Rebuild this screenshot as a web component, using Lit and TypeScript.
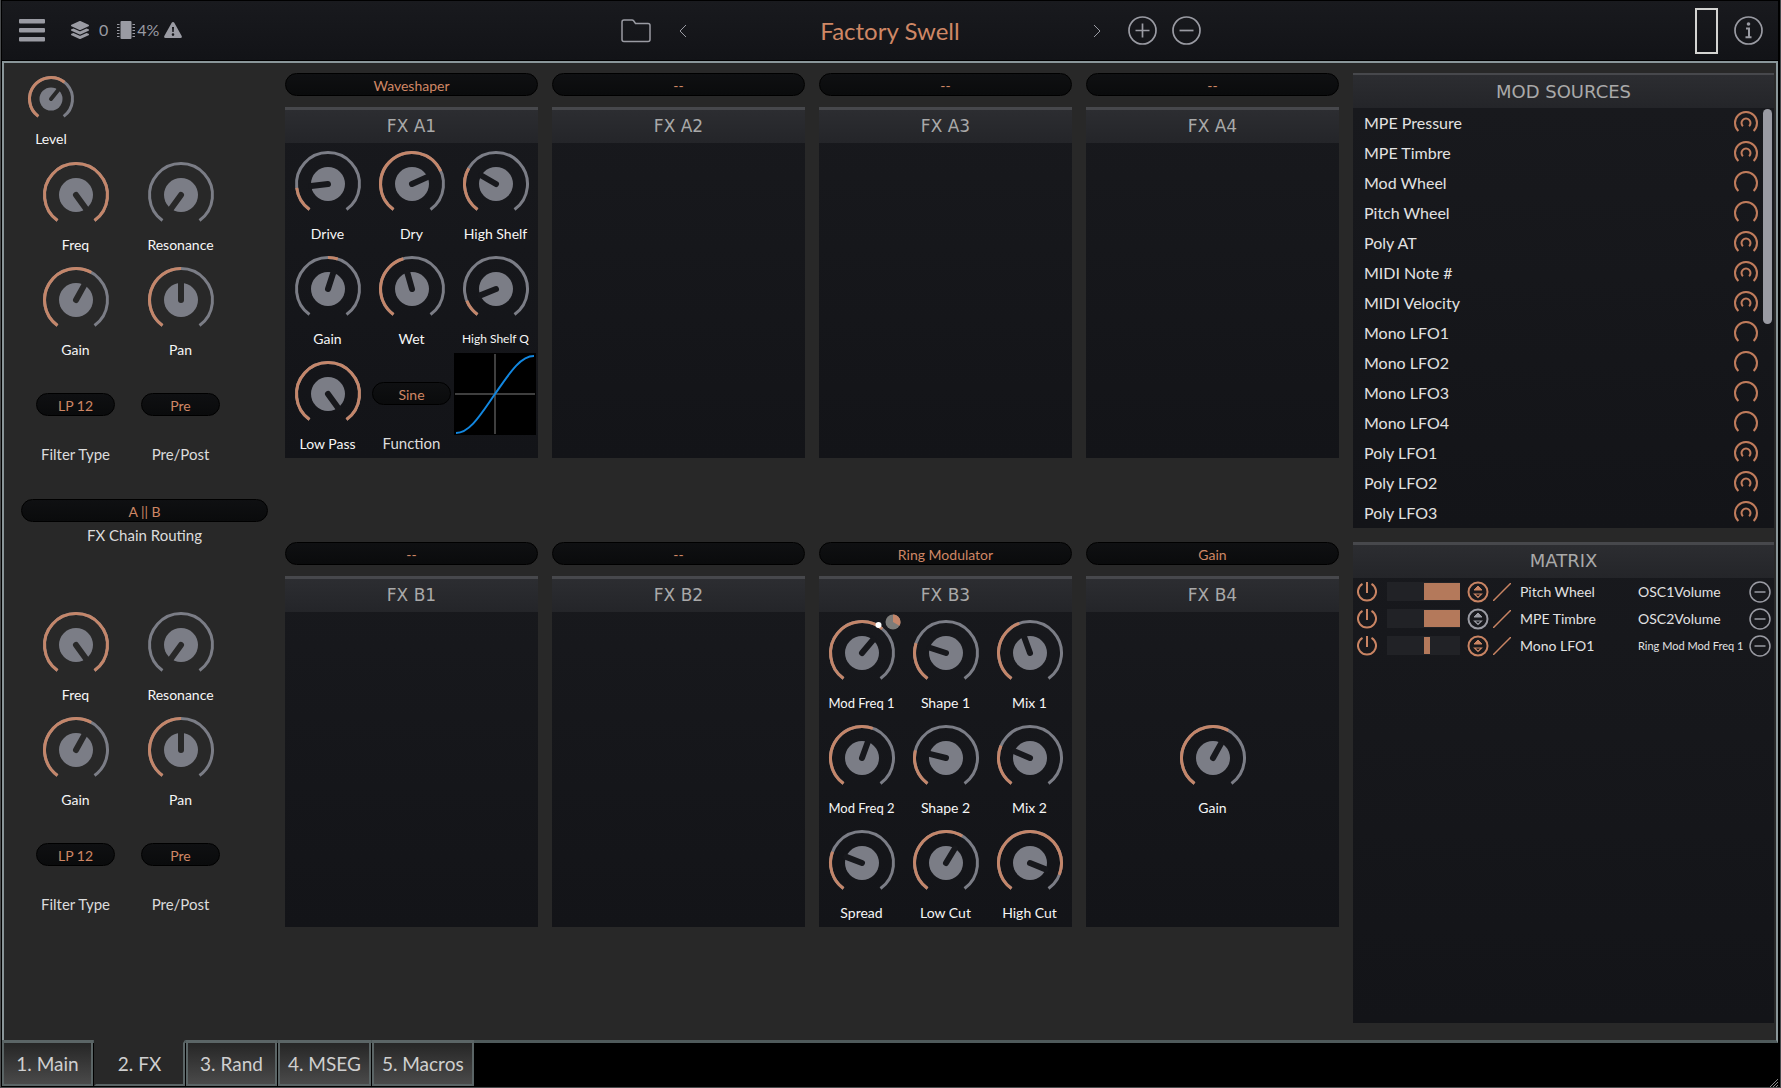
import { LitElement, html, svg, css, nothing } from "lit";
import { customElement, property } from "lit/decorators.js";
import { classMap } from "lit/directives/class-map.js";
import { styleMap } from "lit/directives/style-map.js";

interface KnobSpec {
  label: string;
  /** Pointer angle in degrees, 0 is straight up. */
  angle: number;
  /** Angle where the coloured arc starts; bipolar knobs start at 0. */
  from?: number;
  modulated?: boolean;
  /** Smaller caption for names that would crowd the neighbouring knob. */
  caption?: "compact" | "tight";
}

const LIMIT = 144;

const polar = (c: number, r: number, deg: number): string => {
  const a = (deg * Math.PI) / 180;
  return `${(c + r * Math.sin(a)).toFixed(2)} ${(c - r * Math.cos(a)).toFixed(2)}`;
};

const arc = (c: number, r: number, a: number, b: number): string =>
  `M${polar(c, r, a)}A${r} ${r} 0 ${b - a > 180 ? 1 : 0} 1 ${polar(c, r, b)}`;

@customElement("synth-knob")
export class SynthKnob extends LitElement {
  @property({ attribute: false }) spec!: KnobSpec;
  @property({ type: Boolean, reflect: true }) small = false;

  static styles = css`
    :host {
      display: flex;
      flex-direction: column;
      align-items: center;
      box-sizing: border-box;
      width: 84px;
      height: 105px;
      padding-top: 8px;
      gap: 9px;
    }
    :host([small]) {
      width: 46px;
      height: 72px;
      padding-top: 0;
    }
    .dial {
      position: relative;
      display: grid;
    }
    svg {
      display: block;
      overflow: visible;
    }
    .slider {
      position: absolute;
      inset: 0;
      width: 100%;
      height: 100%;
      margin: 0;
      opacity: 0;
      cursor: pointer;
    }
    .label {
      font-size: 14px;
      line-height: 16px;
      white-space: nowrap;
      color: #f6f6f6;
    }
    .compact {
      font-size: 13px;
    }
    .tight {
      font-size: 12px;
    }
    .track {
      fill: none;
      stroke: #7b7d86;
      stroke-width: 3;
    }
    .value {
      fill: none;
      stroke: #c4866a;
      stroke-width: 3;
    }
    .cap {
      fill: #7b7d86;
    }
    .notch {
      stroke: var(--surface, #17181c);
      stroke-linecap: round;
    }
  `;

  render() {
    const { label, angle, from = -LIMIT, modulated, caption } = this.spec;
    const size = this.small ? 46 : 66;
    const c = size / 2;
    const r = c - 1.5;
    const capR = this.small ? 11.5 : 17;
    return html`
      <div class="dial">
        <svg width=${size} height=${size} viewBox="0 0 ${size} ${size}" aria-hidden="true">
          <path class="track" d=${arc(c, r, -LIMIT, LIMIT)} />
          ${angle > from ? svg`<path class="value" d=${arc(c, r, from, angle)} />` : nothing}
          <circle class="cap" cx=${c} cy=${c} r=${capR} />
          <path
            class="notch"
            stroke-width=${this.small ? 4 : 6}
            d="M${c} ${c}L${polar(c, capR, angle)}"
          />
          ${modulated
            ? svg`<circle cx="49.5" cy="5" r="3" fill="#fff" />
                <circle cx="64" cy="2" r="7.5" fill="#7c7c7a" />
                <path d="M64 2V-5.5A7.5 7.5 0 0 1 70.5 5.7Z" fill="#c4866a" />`
            : nothing}
        </svg>
        <input
          class="slider"
          id="dial"
          type="range"
          min=${-LIMIT}
          max=${LIMIT}
          .value=${String(angle)}
        />
      </div>
      <label
        class=${classMap({ label: true, compact: caption === "compact", tight: caption === "tight" })}
        for="dial"
        >${label}</label
      >
    `;
  }
}

@customElement("pill-select")
export class PillSelect extends LitElement {
  @property() value = "";
  @property() label = "";

  static styles = css`
    :host {
      display: block;
    }
    .pill {
      display: block;
      appearance: none;
      box-sizing: border-box;
      width: 100%;
      height: 23px;
      margin: 0;
      padding: 2px 0 0;
      border: 1px solid #000;
      border-radius: 12px;
      background: linear-gradient(#0f1012, #0a0b0c);
      color: #cf8765;
      font: inherit;
      font-size: 14px;
      line-height: 18px;
      text-align: center;
      text-align-last: center;
    }
  `;

  render() {
    return html`<select class="pill" aria-label=${this.label}>
      <option>${this.value}</option>
    </select>`;
  }
}

@customElement("filter-block")
export class FilterBlock extends LitElement {
  static styles = css`
    :host {
      display: grid;
      grid-template-columns: 105px 105px;
      grid-auto-rows: 105px;
      justify-items: center;
    }
    .choice {
      display: flex;
      flex-direction: column;
      align-items: center;
      padding-top: 29px;
      gap: 30px;
      font-size: 15px;
      line-height: 16px;
      color: #dcdcdc;
    }
    .choice pill-select {
      width: 79px;
    }
  `;

  render() {
    const knobs: KnobSpec[] = [
      { label: "Freq", angle: 144 },
      { label: "Resonance", angle: -144 },
      { label: "Gain", angle: 29 },
      { label: "Pan", angle: 0 },
    ];
    return html`
      ${knobs.map((k) => html`<synth-knob .spec=${k}></synth-knob>`)}
      <div class="choice">
        <pill-select value="LP 12" label="Filter Type"></pill-select><span>Filter Type</span>
      </div>
      <div class="choice">
        <pill-select value="Pre" label="Pre/Post"></pill-select><span>Pre/Post</span>
      </div>
    `;
  }
}

@customElement("fx-slot")
export class FxSlot extends LitElement {
  @property() name = "";
  @property() effect = "--";
  @property({ attribute: false }) knobs: KnobSpec[] = [];

  static styles = css`
    :host {
      display: flex;
      flex-direction: column;
      gap: 11px;
      min-width: 0;
    }
    .panel {
      background: linear-gradient(#18191d, #131418);
    }
    .title {
      box-sizing: border-box;
      height: 36px;
      margin: 0;
      border-top: 3px solid #47484c;
      background: linear-gradient(#2c2d31, #242529);
      color: #a9a9a9;
      font: 17px/32px Verdana, "DejaVu Sans", sans-serif;
      text-align: center;
    }
    .body {
      display: grid;
      grid-template-columns: repeat(3, 84px);
      grid-template-rows: repeat(3, 105px);
      justify-content: center;
    }
    .single {
      grid-column: 2;
      grid-row: 2;
    }
    .choice {
      display: flex;
      flex-direction: column;
      align-items: center;
      padding-top: 29px;
      gap: 30px;
      font-size: 15px;
      line-height: 16px;
      color: #dcdcdc;
    }
    .choice pill-select {
      width: 79px;
    }
    .curve {
      display: block;
    }
  `;

  private shaper() {
    return html`
      <div class="choice">
        <pill-select value="Sine" label="Function"></pill-select><span>Function</span>
      </div>
      <svg class="curve" width="84" height="84" viewBox="0 0 84 84" aria-hidden="true">
        <rect x="0" y="0" width="82" height="82" fill="#000" />
        <path d="M41 1V81M1 41H81" stroke="#3f3f3f" stroke-width="2" />
        <path
          d="M2 80C16 80 27 61 41 41S66 3 80 3"
          fill="none"
          stroke="#1287e0"
          stroke-width="2"
        />
      </svg>
    `;
  }

  render() {
    const single = this.knobs.length === 1;
    return html`
      <pill-select value=${this.effect} label="${this.name} effect"></pill-select>
      <section class="panel">
        <h2 class="title">${this.name}</h2>
        <div class="body">
          ${this.knobs.map(
            (k) => html`<synth-knob class=${classMap({ single })} .spec=${k}></synth-knob>`
          )}
          ${this.effect === "Waveshaper" ? this.shaper() : nothing}
        </div>
      </section>
    `;
  }
}

@customElement("mod-sources")
export class ModSources extends LitElement {
  static styles = css`
    :host {
      display: block;
    }
    .title {
      box-sizing: border-box;
      height: 35px;
      margin: 0;
      border-top: 2px solid #47484c;
      background: linear-gradient(#2c2d31, #242529);
      color: #a9a9a9;
      font: 18px/34px Verdana, "DejaVu Sans", sans-serif;
      text-align: center;
    }
    .frame {
      display: flex;
      padding: 0 2px 0 11px;
      background: linear-gradient(#18191d, #131418);
    }
    .list {
      flex: 1;
      margin: 0;
      padding: 0 5px 0 0;
      list-style: none;
    }
    .row {
      display: flex;
      align-items: center;
      justify-content: space-between;
      height: 30px;
      font-size: 16px;
      line-height: 20px;
      color: #e2e2e2;
    }
    .bar {
      width: 9px;
      height: 215px;
      margin-top: 1px;
      border-radius: 5px;
      background: #9a9ba3;
    }
  `;

  render() {
    const sources: [string, boolean][] = [
      ["MPE Pressure", true],
      ["MPE Timbre", true],
      ["Mod Wheel", false],
      ["Pitch Wheel", false],
      ["Poly AT", true],
      ["MIDI Note #", true],
      ["MIDI Velocity", true],
      ["Mono LFO1", false],
      ["Mono LFO2", false],
      ["Mono LFO3", false],
      ["Mono LFO4", false],
      ["Poly LFO1", true],
      ["Poly LFO2", true],
      ["Poly LFO3", true],
    ];
    return html`
      <h2 class="title">MOD SOURCES</h2>
      <div class="frame">
        <ul class="list">
          ${sources.map(
            ([name, poly]) => html`<li class="row">
              <span>${name}</span>
              <svg width="24" height="24" viewBox="0 0 24 24" fill="none" stroke="#c07c5c" stroke-width="2">
                <path d=${arc(12, 11, -136, 136)} />
                ${poly ? svg`<path d=${arc(12, 4.5, -136, 136)} />` : nothing}
              </svg>
            </li>`
          )}
        </ul>
        <div class="bar"></div>
      </div>
    `;
  }
}

@customElement("mod-matrix")
export class ModMatrix extends LitElement {
  static styles = css`
    :host {
      display: flex;
      flex-direction: column;
      background: linear-gradient(#18191d, #131418);
    }
    .title {
      box-sizing: border-box;
      height: 36px;
      margin: 0;
      border-top: 3px solid #47484c;
      background: linear-gradient(#2c2d31, #242529);
      color: #a9a9a9;
      font: 18px/32px Verdana, "DejaVu Sans", sans-serif;
      text-align: center;
    }
    .row {
      display: grid;
      grid-template-columns: 30px 80px 26px 27px 118px 1fr 22px;
      align-items: center;
      height: 27px;
      padding: 0 3px 0 4px;
      font-size: 14px;
      line-height: 18px;
      color: #e2e2e2;
      white-space: nowrap;
    }
    .depth {
      box-sizing: border-box;
      display: flex;
      width: 73px;
      height: 19px;
      padding: 1px 0 1px 37px;
      background: #212226;
    }
    .fill {
      background: #b4795b;
    }
    .compact {
      font-size: 11px;
    }
    .icon {
      display: block;
      padding: 0;
      border: 0;
      background: none;
    }
    .icon svg {
      display: block;
    }
  `;

  render() {
    const rows = [
      { source: "Pitch Wheel", target: "OSC1Volume", depth: 100, bipolar: true },
      { source: "MPE Timbre", target: "OSC2Volume", depth: 100, bipolar: false },
      { source: "Mono LFO1", target: "Ring Mod Mod Freq 1", depth: 18, bipolar: true },
    ];
    return html`
      <h2 class="title">MATRIX</h2>
      ${rows.map((r) => this.row(r))}
    `;
  }

  private row(r: { source: string; target: string; depth: number; bipolar: boolean }) {
    const tint = r.bipolar ? "#c98463" : "#9a9ba3";
    return html`<div class="row">
      <button class="icon" aria-label="Enable">
        <svg width="20" height="20" viewBox="0 0 20 20" fill="none" stroke="#c98463" stroke-width="2">
          <path d="M10 0V11M5.5 1.8A9 9 0 1 0 14.5 1.8" />
        </svg>
      </button>
      <div class="depth"><div class="fill" style=${styleMap({ width: `${r.depth}%` })}></div></div>
      <button class="icon" aria-label="Polarity">
        <svg width="22" height="22" viewBox="0 0 22 22" fill="none" stroke=${tint} stroke-width="2">
          <circle cx="11" cy="11" r="9.5" />
          <path d="M7 9L11 5L15 9Z" fill=${tint} stroke-width="1" />
          <path d="M7.5 13L11 16.5L14.5 13Z" stroke-width="1.2" />
        </svg>
      </button>
      <button class="icon" aria-label="Curve">
        <svg width="18" height="18" viewBox="0 0 18 18" stroke="#c98463" stroke-width="1.5">
          <path d="M0 18L18 0" />
        </svg>
      </button>
      <span>${r.source}</span>
      <span class=${classMap({ compact: r.target.length > 11 })}>${r.target}</span>
      <button class="icon" aria-label="Remove">
        <svg width="22" height="22" viewBox="0 0 22 22" fill="none" stroke="#9a9ba3" stroke-width="1.5">
          <circle cx="11" cy="11" r="10" />
          <path d="M5.5 11H16.5" />
        </svg>
      </button>
    </div>`;
  }
}

@customElement("app-root")
export class AppRoot extends LitElement {
  static styles = css`
    :host {
      display: flex;
      flex-direction: column;
      box-sizing: border-box;
      min-height: 100vh;
      padding: 1px 2px 0 1px;
      border: solid #4a4c4e;
      border-width: 0 1px 1px;
      background: #000;
      font-family: Lato, "Open Sans", sans-serif;
    }
    .header {
      display: grid;
      grid-template-columns: 1fr auto 1fr;
      align-items: center;
      height: 59px;
      margin-bottom: 1px;
      background: linear-gradient(#191a1e, #121317);
      color: #9a9ba3;
    }
    .icon {
      display: block;
      padding: 0;
      border: 0;
      background: none;
      color: inherit;
    }
    .icon svg,
    .status svg {
      display: block;
    }
    .status {
      display: flex;
      align-items: center;
      padding: 0 0 1px 17px;
      font-size: 16px;
      line-height: 20px;
    }
    .layers {
      margin-left: 26px;
    }
    .voices {
      margin: 0 9px 0 10px;
    }
    .load {
      margin: 0 5px 0 2px;
    }
    .preset {
      display: flex;
      align-items: center;
      padding-left: 42px;
    }
    .preset .name {
      width: 406px;
      margin: 0;
      color: #cf8765;
      font-size: 24px;
      font-weight: 400;
      line-height: 30px;
      text-align: center;
    }
    .prev {
      margin-left: 28px;
    }
    .add {
      margin: 0 15px 0 27px;
    }
    .side {
      display: flex;
      align-items: center;
      justify-content: flex-end;
      gap: 16px;
      padding-right: 15px;
    }
    .meter {
      box-sizing: border-box;
      width: 23px;
      height: 46px;
      border: 2px solid #d4d4d2;
    }
    .body {
      flex: 1;
      display: grid;
      grid-template-columns: 267px minmax(0, 1fr) 421px;
      column-gap: 14px;
      padding: 10px 2px 17px 0;
      border: 2px solid #8a9699;
      border-bottom: 3px solid #4f5a5b;
      background: #282828;
    }
    .filters {
      --surface: #282828;
      display: flex;
      flex-direction: column;
    }
    .level {
      margin-left: 24px;
      margin-top: 3px;
    }
    .filters filter-block {
      margin-left: 19px;
      margin-top: 6px;
    }
    .routing {
      display: flex;
      flex-direction: column;
      gap: 5px;
      margin: 30px 3px 55px 17px;
      font-size: 15px;
      line-height: 16px;
      color: #dcdcdc;
      text-align: center;
    }
    .slots {
      display: grid;
      grid-template-columns: repeat(4, minmax(0, 1fr));
      gap: 84px 14px;
      align-content: start;
    }
    .mods {
      display: flex;
      flex-direction: column;
      gap: 14px;
    }
    .mods mod-matrix {
      flex: 1;
    }
    .tabs {
      display: flex;
      height: 44px;
    }
    .tab {
      box-sizing: border-box;
      min-width: 91px;
      height: 46px;
      margin: -3px 1px 0 0;
      padding: 0 8px;
      border: 2px solid #5b6566;
      border-top-width: 3px;
      background: linear-gradient(#262626, #4a4a4a);
      color: #cfcfcf;
      font: inherit;
      font-size: 19px;
      line-height: 24px;
    }
    .active {
      border-top-color: #282828;
      border-left-color: #282828;
      background: #282828;
    }
    .grip {
      display: block;
      margin-left: auto;
      align-self: flex-end;
    }
  `;

  render() {
    const fx: { name: string; effect?: string; knobs?: KnobSpec[] }[] = [
      {
        name: "FX A1",
        effect: "Waveshaper",
        knobs: [
          { label: "Drive", angle: -97 },
          { label: "Dry", angle: 66 },
          { label: "High Shelf", angle: -60 },
          { label: "Gain", angle: 18, from: 0 },
          { label: "Wet", angle: -16 },
          { label: "High Shelf Q", angle: -112, caption: "tight" },
          { label: "Low Pass", angle: 144 },
        ],
      },
      { name: "FX A2" },
      { name: "FX A3" },
      { name: "FX A4" },
      { name: "FX B1" },
      { name: "FX B2" },
      {
        name: "FX B3",
        effect: "Ring Modulator",
        knobs: [
          { label: "Mod Freq 1", angle: 40, modulated: true, caption: "compact" },
          { label: "Shape 1", angle: -72 },
          { label: "Mix 1", angle: -20 },
          { label: "Mod Freq 2", angle: 20, caption: "compact" },
          { label: "Shape 2", angle: -76 },
          { label: "Mix 2", angle: -67 },
          { label: "Spread", angle: -69 },
          { label: "Low Cut", angle: 31 },
          { label: "High Cut", angle: 112 },
        ],
      },
      { name: "FX B4", effect: "Gain", knobs: [{ label: "Gain", angle: 29 }] },
    ];
    return html`
      <header class="header">
        <div class="status">
          <button class="icon" aria-label="Menu">
            <svg width="26" height="24" viewBox="0 0 26 24" fill="currentColor">
              <rect width="26" height="4.5" y="1" rx="1" />
              <rect width="26" height="4.5" y="10" rx="1" />
              <rect width="26" height="4.5" y="19" rx="1" />
            </svg>
          </button>
          <svg class="layers" width="18" height="18" viewBox="0 0 512 512" fill="currentColor">
            <path
              d="M12 148l232 105c8 4 16 4 24 0l232-105c16-7 16-33 0-40L268 3c-8-4-16-4-24 0L12 108c-16 7-16 33 0 40zM500 236l-58-26-161 73c-16 8-34 8-50 0L70 210l-58 26c-16 7-16 33 0 40l232 105c8 4 16 4 24 0l232-105c16-7 16-33 0-40zM500 364l-58-26-161 73c-16 8-34 8-50 0L70 338l-58 26c-16 7-16 33 0 40l232 105c8 4 16 4 24 0l232-105c16-7 16-33 0-40z"
            />
          </svg>
          <span class="voices">0</span>
          <svg width="18" height="18" viewBox="0 0 18 18" fill="currentColor">
            <rect x="3.5" width="11" height="18" rx="1" />
            <path
              d="M0 3.5H2.5M0 6.5H2.5M0 9.5H2.5M0 12.5H2.5M0 15.5H2.5M15.5 3.5H18M15.5 6.5H18M15.5 9.5H18M15.5 12.5H18M15.5 15.5H18"
              stroke="currentColor"
              stroke-width="1"
            />
          </svg>
          <span class="load">4%</span>
          <svg width="18" height="16" viewBox="0 0 18 16" fill="currentColor">
            <path
              fill-rule="evenodd"
              d="M9 0Q9.8 0 10.3 .8L17.7 14Q18.3 16 16.5 16H1.5Q-.3 16 .3 14L7.7 .8Q8.2 0 9 0ZM8 5L8.3 10H9.7L10 5ZM9 11.3A1.3 1.3 0 1 0 9 13.9A1.3 1.3 0 1 0 9 11.3Z"
            />
          </svg>
        </div>
        <div class="preset">
          <button class="icon" aria-label="Open">
            <svg width="30" height="24" viewBox="0 0 30 24" fill="none" stroke="currentColor" stroke-width="1.5">
              <path
                d="M3 1H11Q12 1 12.6 1.8L14.5 4.5H27Q29 4.5 29 6.5V20.5Q29 22.5 27 22.5H3Q1 22.5 1 20.5V3Q1 1 3 1Z"
              />
            </svg>
          </button>
          <button class="icon prev" aria-label="Previous">
            <svg width="8" height="14" viewBox="0 0 8 14" fill="none" stroke="currentColor">
              <path d="M7 1L1 7L7 13" />
            </svg>
          </button>
          <h1 class="name">Factory Swell</h1>
          <button class="icon" aria-label="Next">
            <svg width="8" height="14" viewBox="0 0 8 14" fill="none" stroke="currentColor">
              <path d="M1 1L7 7L1 13" />
            </svg>
          </button>
          <button class="icon add" aria-label="Add">
            <svg width="29" height="29" viewBox="0 0 29 29" fill="none" stroke="currentColor" stroke-width="1.7">
              <circle cx="14.5" cy="14.5" r="13.5" />
              <path d="M7.5 14.5H21.5M14.5 7.5V21.5" />
            </svg>
          </button>
          <button class="icon" aria-label="Delete">
            <svg width="29" height="29" viewBox="0 0 29 29" fill="none" stroke="currentColor" stroke-width="1.7">
              <circle cx="14.5" cy="14.5" r="13.5" />
              <path d="M7.5 14.5H21.5" />
            </svg>
          </button>
        </div>
        <div class="side">
          <div class="meter"></div>
          <button class="icon" aria-label="About">
            <svg width="29" height="29" viewBox="0 0 29 29" fill="none" stroke="currentColor" stroke-width="1.7">
              <circle cx="14.5" cy="14.5" r="13.5" />
              <circle cx="14.5" cy="8" r="1.8" fill="currentColor" stroke="none" />
              <path d="M12 12.5H15V21M11.5 21.2H17.5" stroke-width="2" />
            </svg>
          </button>
        </div>
      </header>
      <main class="body">
        <div class="filters">
          <synth-knob class="level" small .spec=${{ label: "Level", angle: 39 }}></synth-knob>
          <filter-block></filter-block>
          <div class="routing">
            <pill-select value="A || B" label="FX Chain Routing"></pill-select>
            <span>FX Chain Routing</span>
          </div>
          <filter-block></filter-block>
        </div>
        <div class="slots">
          ${fx.map(
            (f) => html`<fx-slot
              .name=${f.name}
              .effect=${f.effect ?? "--"}
              .knobs=${f.knobs ?? []}
            ></fx-slot>`
          )}
        </div>
        <div class="mods">
          <mod-sources></mod-sources>
          <mod-matrix></mod-matrix>
        </div>
      </main>
      <nav class="tabs">
        ${["1. Main", "2. FX", "3. Rand", "4. MSEG", "5. Macros"].map(
          (t, i) => html`<button class=${classMap({ tab: true, active: i === 1 })}>${t}</button>`
        )}
        <svg class="grip" width="8" height="8" viewBox="0 0 8 8" stroke="#8a8a8a" aria-hidden="true">
          <path d="M0 8L8 0M3 8L8 3M6 8L8 6" />
        </svg>
      </nav>
    `;
  }
}
